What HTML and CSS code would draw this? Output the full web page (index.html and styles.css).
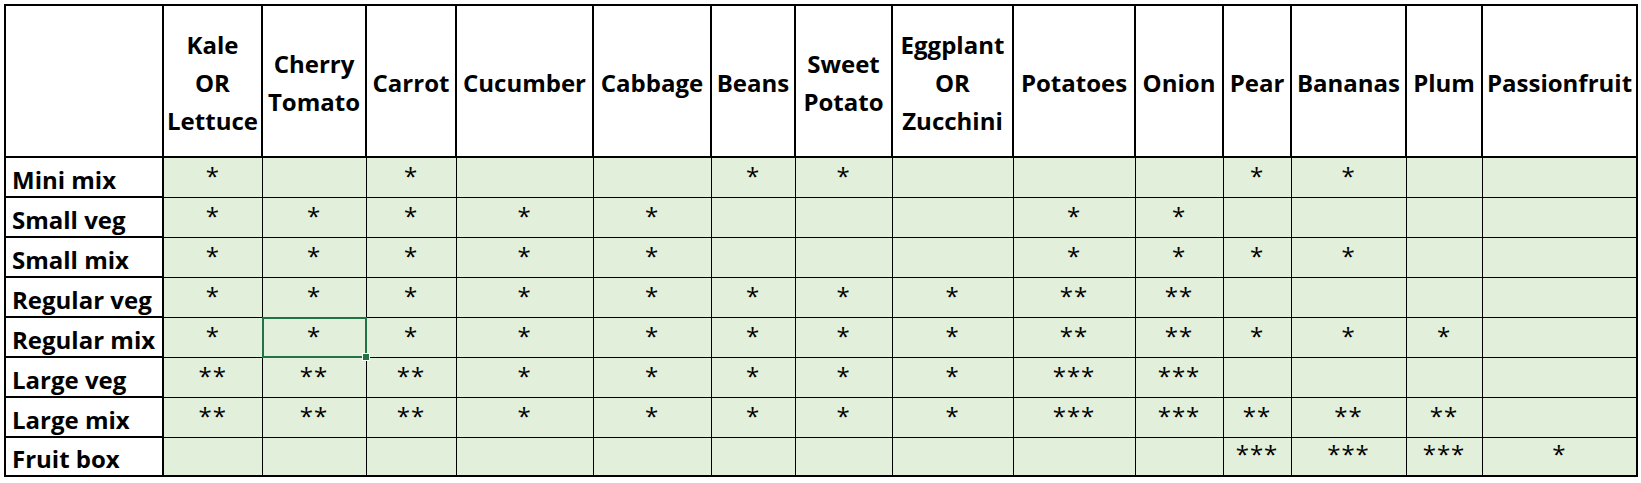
FILE: index.html
```html
<!DOCTYPE html>
<html>
<head>
<meta charset="utf-8">
<link rel="stylesheet" href="styles.css">
</head>
<body>
<div class="sheet">
<table class="grid">
<colgroup>
<col style="width:158px"><col style="width:99px"><col style="width:104px"><col style="width:90px"><col style="width:137px"><col style="width:118px"><col style="width:84px"><col style="width:97px"><col style="width:121px"><col style="width:122px"><col style="width:88px"><col style="width:68px"><col style="width:115px"><col style="width:76px"><col style="width:155px">
</colgroup>
<thead>
<tr class="head">
<th class="corner"></th>
<th>Kale<br>OR<br>Lettuce</th>
<th>Cherry<br>Tomato</th>
<th>Carrot</th>
<th>Cucumber</th>
<th>Cabbage</th>
<th>Beans</th>
<th>Sweet<br>Potato</th>
<th>Eggplant<br>OR<br>Zucchini</th>
<th>Potatoes</th>
<th>Onion</th>
<th>Pear</th>
<th>Bananas</th>
<th>Plum</th>
<th>Passionfruit</th>
</tr>
</thead>
<tbody>
<tr><th class="label">Mini mix</th><td>*</td><td></td><td>*</td><td></td><td></td><td>*</td><td>*</td><td></td><td></td><td></td><td>*</td><td>*</td><td></td><td></td></tr>
<tr><th class="label">Small veg</th><td>*</td><td>*</td><td>*</td><td>*</td><td>*</td><td></td><td></td><td></td><td>*</td><td>*</td><td></td><td></td><td></td><td></td></tr>
<tr><th class="label">Small mix</th><td>*</td><td>*</td><td>*</td><td>*</td><td>*</td><td></td><td></td><td></td><td>*</td><td>*</td><td>*</td><td>*</td><td></td><td></td></tr>
<tr><th class="label">Regular veg</th><td>*</td><td>*</td><td>*</td><td>*</td><td>*</td><td>*</td><td>*</td><td>*</td><td>**</td><td>**</td><td></td><td></td><td></td><td></td></tr>
<tr><th class="label">Regular mix</th><td>*</td><td class="selected">*</td><td>*</td><td>*</td><td>*</td><td>*</td><td>*</td><td>*</td><td>**</td><td>**</td><td>*</td><td>*</td><td>*</td><td></td></tr>
<tr><th class="label">Large veg</th><td>**</td><td>**</td><td>**</td><td>*</td><td>*</td><td>*</td><td>*</td><td>*</td><td>***</td><td>***</td><td></td><td></td><td></td><td></td></tr>
<tr><th class="label">Large mix</th><td>**</td><td>**</td><td>**</td><td>*</td><td>*</td><td>*</td><td>*</td><td>*</td><td>***</td><td>***</td><td>**</td><td>**</td><td>**</td><td></td></tr>
<tr class="last"><th class="label">Fruit box</th><td></td><td></td><td></td><td></td><td></td><td></td><td></td><td></td><td></td><td></td><td>***</td><td>***</td><td>***</td><td>*</td></tr>
</tbody>
</table>
</div>
</body>
</html>
```
FILE: styles.css
```css
html, body {
  margin: 0;
  padding: 0;
  background: #ffffff;
}

.sheet {
  padding: 4px 0 0 4px;
}

.grid {
  border-collapse: collapse;
  table-layout: fixed;
  width: 1632px;
  border: 2px solid #000;
  font-family: "Open Sans", "Liberation Sans", sans-serif;
  color: #000;
}

.head {
  height: 152px;
}

.head th {
  border: 2px solid #000;
  font-weight: 700;
  font-size: 24px;
  line-height: 38px;
  text-align: center;
  vertical-align: middle;
  padding: 4px 0 0 0;
  background: #fff;
  white-space: nowrap;
}

tbody tr {
  height: 40px;
}

tbody tr.last {
  height: 39px;
}

.label {
  border: 2px solid #000;
  background: #fff;
  font-weight: 700;
  font-size: 24px;
  line-height: 30px;
  text-align: left;
  vertical-align: bottom;
  padding: 0 0 1px 6px;
  white-space: nowrap;
}

tbody td {
  border: 1px solid #000;
  background: #e2efda;
  font-size: 24px;
  line-height: 30px;
  text-align: center;
  vertical-align: bottom;
  padding: 0 0 6px 0;
  letter-spacing: 1px;
}

.selected {
  position: relative;
}

.selected::after {
  content: "";
  position: absolute;
  left: -1px;
  top: -1px;
  right: -1px;
  bottom: -1px;
  border: 2px solid #217346;
}

.selected::before {
  content: "";
  position: absolute;
  right: -4px;
  bottom: -4px;
  width: 6px;
  height: 6px;
  background: #217346;
  border: 1px solid #fff;
  z-index: 2;
}
```
